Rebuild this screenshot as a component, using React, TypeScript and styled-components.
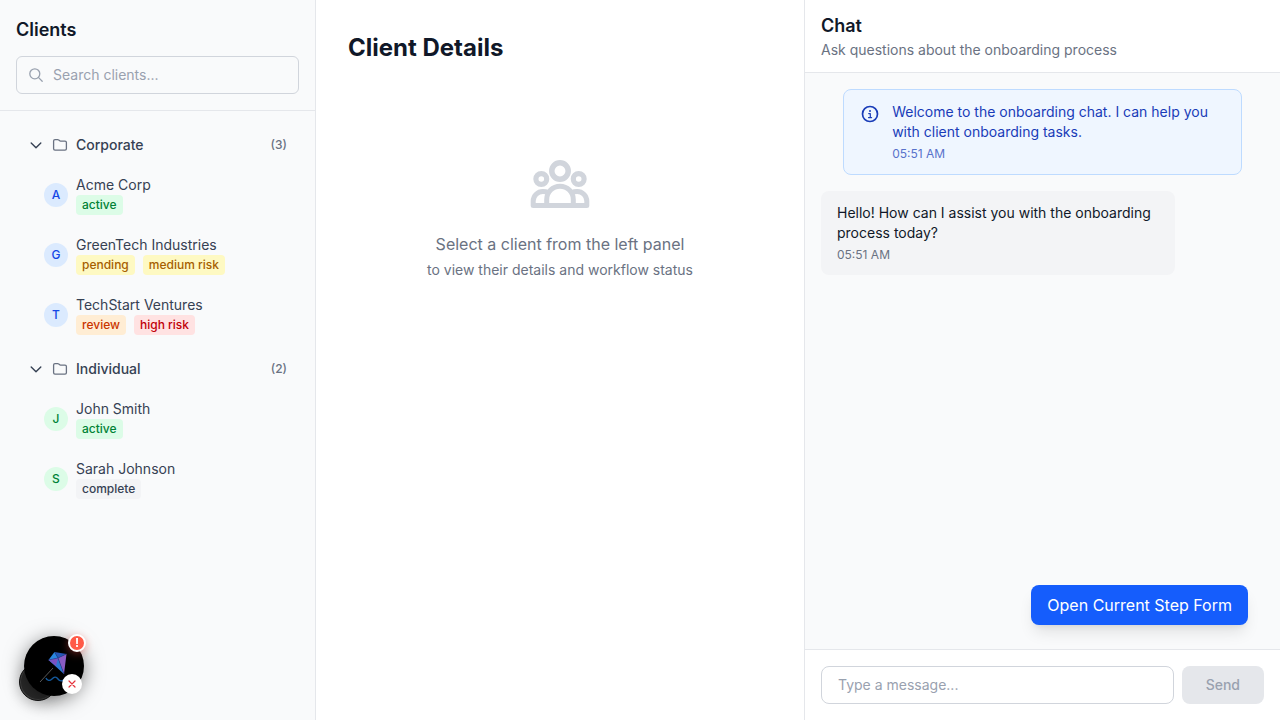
import React, { useState } from 'react';
import styled, { createGlobalStyle } from 'styled-components';

const GlobalStyle = createGlobalStyle`
  *, *::before, *::after { box-sizing: border-box; }
  body {
    margin: 0;
    background: #fff;
    color: #101828;
    font-family: Inter, "Liberation Sans", sans-serif;
    font-size: 16px;
    line-height: 24px;
  }
  h1, h2, h3, p, ul { margin: 0; padding: 0; }
  ul { list-style: none; }
  button, input { font: inherit; color: inherit; margin: 0; }
  button { border: 0; background: none; padding: 0; text-align: left; cursor: pointer; }
  svg { display: block; flex-shrink: 0; }
`;

const Page = styled.div`
  display: grid;
  grid-template-columns: minmax(0, 316fr) minmax(0, 488fr) minmax(0, 476fr);
  min-height: 100vh;
`;

const Sidebar = styled.aside`
  background: #f9fafb;
  border-right: 1px solid #e5e7eb;
`;

const SidebarHeader = styled.header`
  padding: 16px;
  border-bottom: 1px solid #e5e7eb;
`;

const PanelTitle = styled.h2`
  font-size: 18px;
  line-height: 28px;
  font-weight: 600;
`;

const SearchBox = styled.label`
  display: flex;
  align-items: center;
  gap: 8px;
  margin-top: 12px;
  padding: 0 12px;
  border: 1px solid #d1d5dc;
  border-radius: 6px;
  color: #99a1af;
`;

const SearchInput = styled.input`
  flex: 1;
  min-width: 0;
  padding: 8px 0;
  border: 0;
  outline: 0;
  background: transparent;
  color: #101828;
  font-size: 14px;
  line-height: 20px;
  &::placeholder { color: #99a1af; opacity: 1; line-height: 20px; }
`;

const Groups = styled.nav`
  padding: 16px;
`;

const Group = styled.section`
  margin-bottom: 4px;
`;

const GroupButton = styled.button`
  display: flex;
  align-items: center;
  gap: 8px;
  width: 100%;
  padding: 8px 12px;
  color: #364153;
  font-size: 14px;
  line-height: 20px;
  font-weight: 500;
`;

const GroupCount = styled.span`
  margin-left: auto;
  color: #6a7282;
  font-size: 12px;
`;

const ClientList = styled.ul`
  padding-top: 4px;
`;

const ClientButton = styled.button`
  display: flex;
  align-items: center;
  gap: 8px;
  width: 100%;
  padding: 8px 12px 12px 28px;
`;

type Kind = 'corporate' | 'individual';

const Avatar = styled.span<{ $kind: Kind }>`
  display: flex;
  align-items: center;
  justify-content: center;
  width: 24px;
  height: 24px;
  border-radius: 50%;
  font-size: 12px;
  font-weight: 500;
  background: ${p => (p.$kind === 'corporate' ? '#dbeafe' : '#dcfce7')};
  color: ${p => (p.$kind === 'corporate' ? '#1447e6' : '#008236')};
`;

const ClientName = styled.span`
  display: block;
  color: #364153;
  font-size: 14px;
  line-height: 20px;
`;

const BadgeRow = styled.span`
  display: flex;
  gap: 8px;
`;

type Tone = 'green' | 'yellow' | 'orange' | 'red' | 'gray';

const tones: Record<Tone, [string, string]> = {
  green: ['#dcfce7', '#008236'],
  yellow: ['#fef9c2', '#a65f00'],
  orange: ['#ffedd4', '#ca3500'],
  red: ['#ffe2e2', '#c10007'],
  gray: ['#f3f4f6', '#364153'],
};

const Badge = styled.span<{ $tone: Tone }>`
  padding: 2px 6px;
  border-radius: 4px;
  font-size: 12px;
  line-height: 16px;
  font-weight: 500;
  background: ${p => tones[p.$tone][0]};
  color: ${p => tones[p.$tone][1]};
`;

const Details = styled.main`
  padding: 32px;
`;

const DetailsTitle = styled.h1`
  font-size: 24px;
  line-height: 32px;
  font-weight: 700;
`;

const EmptyState = styled.div`
  display: flex;
  flex-direction: column;
  align-items: center;
  padding-top: 96px;
  color: #6a7282;
  text-align: center;
`;

const EmptyLead = styled.p`
  margin-top: 24px;
`;

const EmptyHint = styled.p`
  margin-top: 4px;
  font-size: 14px;
  line-height: 20px;
`;

const Chat = styled.section`
  display: flex;
  flex-direction: column;
  border-left: 1px solid #e5e7eb;
`;

const ChatHeader = styled.header`
  padding: 12px 16px;
  border-bottom: 1px solid #e5e7eb;
`;

const ChatSubtitle = styled.p`
  color: #6a7282;
  font-size: 14px;
  line-height: 20px;
`;

const Messages = styled.div`
  flex: 1;
  display: flex;
  flex-direction: column;
  gap: 16px;
  padding: 16px 16px 24px;
  background: #f9fafb;
`;

const Notice = styled.article`
  align-self: center;
  display: flex;
  gap: 12px;
  width: 90%;
  padding: 12px 16px;
  border: 1px solid #bedbff;
  border-radius: 8px;
  background: #eff6ff;
  color: #193cb8;
  font-size: 14px;
  line-height: 20px;
`;

const NoticeIcon = styled.span`
  padding: 2px 0;
`;

const Bubble = styled.article`
  width: 80%;
  padding: 12px 16px;
  border-radius: 8px;
  background: #f3f4f6;
  font-size: 14px;
  line-height: 20px;
`;

const Time = styled.time<{ $tint: string }>`
  display: block;
  margin-top: 4px;
  font-size: 12px;
  line-height: 16px;
  color: ${p => p.$tint};
`;

const StepButton = styled.button`
  align-self: flex-end;
  margin: auto 16px 0 0;
  padding: 8px 16px;
  border-radius: 8px;
  background: #155dfc;
  color: #fff;
  box-shadow: 0 10px 15px -3px rgba(0, 0, 0, 0.1), 0 4px 6px -4px rgba(0, 0, 0, 0.1);
`;

const Composer = styled.form`
  display: flex;
  gap: 8px;
  padding: 16px;
  border-top: 1px solid #e5e7eb;
`;

const MessageInput = styled.input`
  flex: 1;
  min-width: 0;
  padding: 8px 16px;
  border: 1px solid #d1d5dc;
  border-radius: 8px;
  background: #fff;
  font-size: 14px;
  line-height: 20px;
  &::placeholder { color: #99a1af; opacity: 1; line-height: 20px; }
`;

const SendButton = styled.button`
  padding: 0 24px;
  border-radius: 8px;
  background: #155dfc;
  color: #fff;
  font-size: 14px;
  font-weight: 500;
  &:disabled { background: #e5e7eb; color: #99a1af; cursor: default; }
`;

const Floating = styled.div`
  position: fixed;
  left: 24px;
  bottom: 24px;
  width: 60px;
  height: 60px;
`;

const BackDisc = styled.span`
  position: absolute;
  left: -5px;
  bottom: -5px;
  width: 38px;
  height: 38px;
  border: 1px solid #111;
  border-radius: 50%;
  background: #2b2b2b;
  box-shadow: inset 0 0 0 1px #454545, 0 4px 16px rgba(0, 0, 0, 0.2);
`;

const KiteButton = styled.button`
  position: absolute;
  inset: 0;
  border-radius: 50%;
  background: #000;
  box-shadow: 0 4px 20px rgba(0, 0, 0, 0.5);
`;

const Alert = styled.span`
  position: absolute;
  top: -2px;
  right: -2px;
  display: flex;
  align-items: center;
  justify-content: center;
  width: 18px;
  height: 18px;
  border: 2px solid #fff;
  border-radius: 50%;
  background: #ff5a48;
  box-shadow: 0 2px 8px rgba(255, 80, 70, 0.4);
  color: #fff;
  font-size: 12px;
  line-height: 14px;
  font-weight: 700;
`;

const CloseButton = styled.button`
  position: absolute;
  right: 2px;
  bottom: 2px;
  display: flex;
  align-items: center;
  justify-content: center;
  width: 20px;
  height: 20px;
  border-radius: 50%;
  background: #fff;
  color: #e5343d;
`;

const SearchIcon = () => (
  <svg width="16" height="16" viewBox="0 0 16 16" fill="none" stroke="currentColor" strokeWidth="1.3" strokeLinecap="round" aria-hidden="true">
    <circle cx="5.800" cy="6.800" r="5" />
    <path d="M9.400 10.400 13.200 14.200" />
  </svg>
);

const ChevronIcon = () => (
  <svg width="16" height="16" viewBox="0 0 16 16" fill="none" stroke="currentColor" strokeWidth="1.4" strokeLinecap="round" strokeLinejoin="round" aria-hidden="true">
    <path d="M3.2 6 8 10.7 12.8 6" />
  </svg>
);

const FolderIcon = () => (
  <svg width="16" height="16" viewBox="0 0 16 16" fill="none" stroke="#6a7282" strokeWidth="1.3" strokeLinejoin="round" aria-hidden="true">
    <path d="M1.6 11.8V4.1c0-.8.6-1.4 1.4-1.4h2.7c.4 0 .8.1 1.1.4l.9.7c.2.2.5.3.8.3H13c.8 0 1.4.6 1.4 1.4v6.3c0 .8-.6 1.4-1.4 1.4H3c-.8 0-1.4-.6-1.4-1.4Z" />
  </svg>
);

const InfoIcon = () => (
  <svg width="20" height="20" viewBox="0 0 20 20" fill="none" stroke="currentColor" aria-hidden="true">
    <circle cx="10" cy="10" r="7.5" strokeWidth="1.7" />
    <path d="M8.700 9.600h1.600v3.900M8.500 13.600h3.100" strokeWidth="1.200" strokeLinecap="round" strokeLinejoin="round" />
    <circle cx="10" cy="6.900" r="1" fill="currentColor" stroke="none" />
  </svg>
);

const PeopleIcon = () => (
  <svg width="60" height="48" viewBox="0 0 60 48" fill="none" stroke="#d1d5dc" strokeWidth="5" strokeLinejoin="round" aria-hidden="true">
    <circle cx="30" cy="11" r="8.2" strokeWidth="5.5" />
    <circle cx="11.3" cy="19" r="5.4" strokeWidth="5.2" />
    <circle cx="48.7" cy="19" r="5.4" strokeWidth="5.2" />
    <path d="M16.700 45.400V39.500a13.300 13.300 0 0 1 26.600 0v5.900" />
    <path d="M18 32.600c-1.600-.8-3.300-1.100-5-1.100a9.700 9.700 0 0 0-9.800 9.500v4.500h53.600V41a9.700 9.700 0 0 0-9.800-9.500c-1.700 0-3.400.3-5 1.100" />
  </svg>
);

const KiteIcon = () => (
  <svg width="60" height="60" viewBox="0 0 60 60" fill="none" aria-hidden="true">
    <path d="M30.500 16 24.500 24 34 22Z" fill="#2a86de" />
    <path d="M30.500 16 42.500 18 34 22Z" fill="#2557b8" />
    <path d="M24.500 24 34 22 40 38Z" fill="#2f78d2" />
    <path d="M24.500 24 34 22 32 30Z" fill="#7a52c2" />
    <path d="M42.500 18 34 22 40 38Z" fill="#8b5cc4" />
    <path d="M30.500 16 34 22 40 38M24.500 24 34 22 42.500 18" stroke="#1c3f8c" strokeWidth=".5" />
    <path d="M29 32 16 46" stroke="#707070" strokeWidth=".8" />
    <path d="M22 42c1 3 4 3 6 1s4-3 6 0 4 2 6 1" stroke="#145a9e" strokeWidth="1.400" />
  </svg>
);

interface Client {
  name: string;
  badges: [string, Tone][];
}

const groups: { title: string; kind: Kind; clients: Client[] }[] = [
  {
    title: 'Corporate',
    kind: 'corporate',
    clients: [
      { name: 'Acme Corp', badges: [['active', 'green']] },
      { name: 'GreenTech Industries', badges: [['pending', 'yellow'], ['medium risk', 'yellow']] },
      { name: 'TechStart Ventures', badges: [['review', 'orange'], ['high risk', 'red']] },
    ],
  },
  {
    title: 'Individual',
    kind: 'individual',
    clients: [
      { name: 'John Smith', badges: [['active', 'green']] },
      { name: 'Sarah Johnson', badges: [['complete', 'gray']] },
    ],
  },
];

export default function App() {
  const [draft, setDraft] = useState('');
  return (
    <>
      <GlobalStyle />
      <Page>
        <Sidebar>
          <SidebarHeader>
            <PanelTitle>Clients</PanelTitle>
            <SearchBox>
              <SearchIcon />
              <SearchInput type="text" placeholder="Search clients..." aria-label="Search clients" />
            </SearchBox>
          </SidebarHeader>
          <Groups aria-label="Clients">
            {groups.map(group => (
              <Group key={group.title}>
                <GroupButton type="button" aria-expanded="true">
                  <ChevronIcon />
                  <FolderIcon />
                  {group.title}
                  <GroupCount>({group.clients.length})</GroupCount>
                </GroupButton>
                <ClientList>
                  {group.clients.map(client => (
                    <li key={client.name}>
                      <ClientButton type="button">
                        <Avatar $kind={group.kind}>{client.name[0]}</Avatar>
                        <span>
                          <ClientName>{client.name}</ClientName>
                          <BadgeRow>
                            {client.badges.map(([label, tone]) => (
                              <Badge key={label} $tone={tone}>{label}</Badge>
                            ))}
                          </BadgeRow>
                        </span>
                      </ClientButton>
                    </li>
                  ))}
                </ClientList>
              </Group>
            ))}
          </Groups>
        </Sidebar>

        <Details>
          <DetailsTitle>Client Details</DetailsTitle>
          <EmptyState>
            <PeopleIcon />
            <EmptyLead>Select a client from the left panel</EmptyLead>
            <EmptyHint>to view their details and workflow status</EmptyHint>
          </EmptyState>
        </Details>

        <Chat>
          <ChatHeader>
            <PanelTitle>Chat</PanelTitle>
            <ChatSubtitle>Ask questions about the onboarding process</ChatSubtitle>
          </ChatHeader>
          <Messages>
            <Notice>
              <NoticeIcon><InfoIcon /></NoticeIcon>
              <div>
                <p>Welcome to the onboarding chat. I can help you with client onboarding tasks.</p>
                <Time $tint="#5872cb">05:51 AM</Time>
              </div>
            </Notice>
            <Bubble>
              <p>Hello! How can I assist you with the onboarding process today?</p>
              <Time $tint="#6a7282">05:51 AM</Time>
            </Bubble>
            <StepButton type="button">Open Current Step Form</StepButton>
          </Messages>
          <Composer onSubmit={e => e.preventDefault()}>
            <MessageInput
              type="text"
              placeholder="Type a message..."
              aria-label="Message"
              value={draft}
              onChange={e => setDraft(e.target.value)}
            />
            <SendButton type="submit" disabled={!draft.trim()}>Send</SendButton>
          </Composer>
        </Chat>
      </Page>

      <Floating>
        <BackDisc />
        <KiteButton type="button" aria-label="Open assistant"><KiteIcon /></KiteButton>
        <Alert>!</Alert>
        <CloseButton type="button" aria-label="Dismiss">
          <svg width="8" height="8" viewBox="0 0 8 8" stroke="currentColor" strokeWidth="1.200" strokeLinecap="round" aria-hidden="true">
            <path d="M1 1 7 7M7 1 1 7" />
          </svg>
        </CloseButton>
      </Floating>
    </>
  );
}
